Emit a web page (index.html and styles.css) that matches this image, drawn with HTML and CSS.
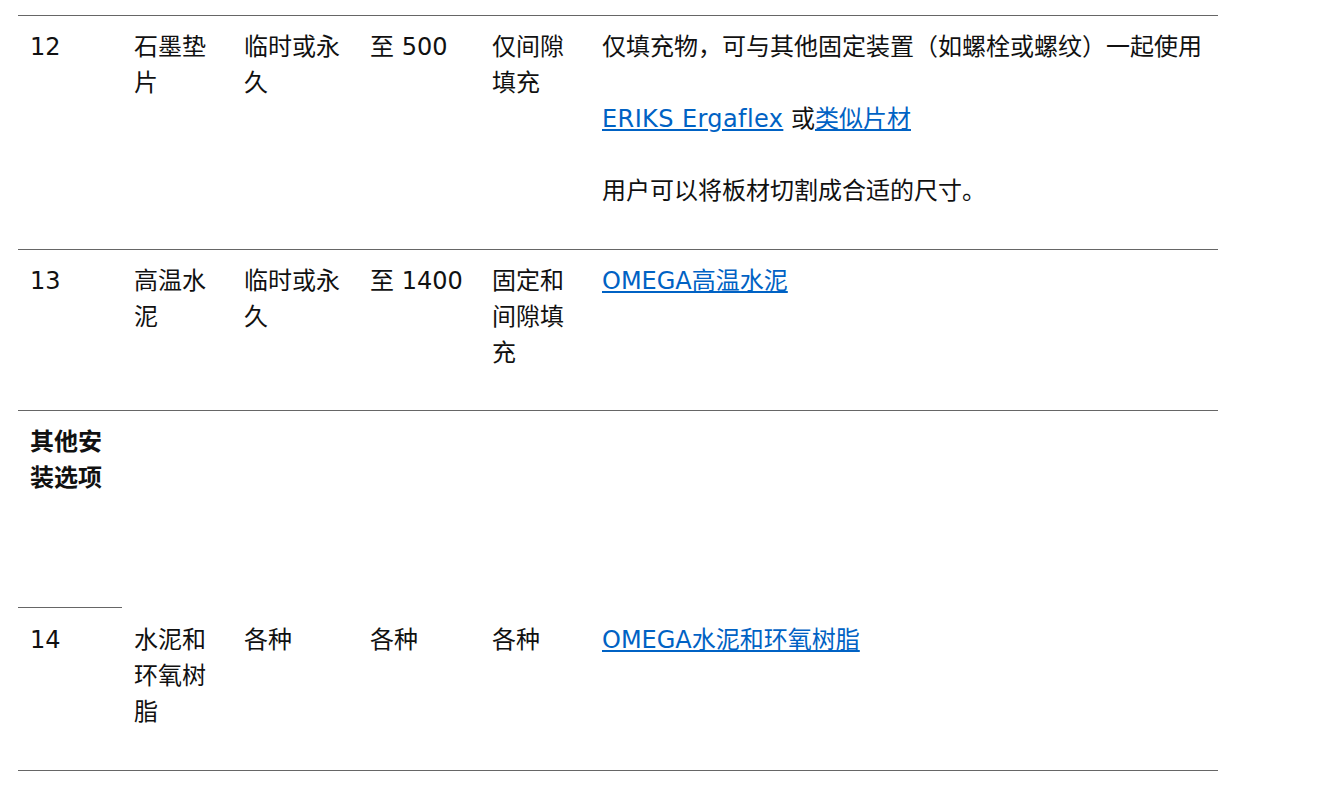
FILE: index.html
```html
<!DOCTYPE html>
<html lang="zh">
<head>
<meta charset="utf-8">
<link rel="stylesheet" href="styles.css">
</head>
<body>
<table class="spec">
  <colgroup>
    <col class="c1"><col class="c2"><col class="c3"><col class="c4"><col class="c5"><col class="c6">
  </colgroup>
  <tbody>
    <tr class="row first">
      <td>12</td>
      <td>石墨垫片</td>
      <td>临时或永久</td>
      <td>至 500</td>
      <td>仅间隙填充</td>
      <td>
        <p>仅填充物，可与其他固定装置（如螺栓或螺纹）一起使用</p>
        <p><a href="#" class="latin">ERIKS Ergaflex</a> 或<a href="#">类似片材</a></p>
        <p>用户可以将板材切割成合适的尺寸。</p>
      </td>
    </tr>
    <tr class="row">
      <td>13</td>
      <td>高温水泥</td>
      <td>临时或永久</td>
      <td>至 1400</td>
      <td>固定和间隙填充</td>
      <td><a href="#">OMEGA高温水泥</a></td>
    </tr>
    <tr class="row group">
      <th>其他安装选项</th>
      <td></td><td></td><td></td><td></td><td></td>
    </tr>
    <tr class="row last">
      <td class="lined">14</td>
      <td>水泥和环氧树脂</td>
      <td>各种</td>
      <td>各种</td>
      <td>各种</td>
      <td><a href="#">OMEGA水泥和环氧树脂</a></td>
    </tr>
  </tbody>
</table>
</body>
</html>
```

FILE: styles.css
```css
html, body {
  margin: 0;
  padding: 0;
  background: #ffffff;
}

body {
  padding: 15px 0 0 18px;
  font-family: "DejaVu Sans", "Noto Sans CJK SC", sans-serif;
  font-size: 24px;
  line-height: 36px;
  color: #111111;
}

.spec {
  width: 1200px;
  border-collapse: collapse;
  table-layout: fixed;
}

.c1 { width: 104px; }
.c2 { width: 110px; }
.c3 { width: 126px; }
.c4 { width: 122px; }
.c5 { width: 110px; }
.c6 { width: 628px; }

.spec td,
.spec th {
  vertical-align: top;
  text-align: left;
  padding: 13px 12px 39px 12px;
  border-top: 1px solid #666666;
}

.first td {
  padding-bottom: 40px;
}

.spec th {
  font-weight: 700;
}

.group th,
.group td {
  padding-bottom: 111px;
}

.last td {
  border-top: none;
  border-bottom: 1px solid #666666;
  padding-top: 14px;
  padding-bottom: 40px;
}

.last td.lined {
  border-top: 1px solid #666666;
}

.spec p {
  margin: 0 0 36px 0;
}

.spec p:last-child {
  margin-bottom: 0;
}

.spec a {
  color: #0062c4;
  text-decoration: underline;
}

.spec a.latin {
  letter-spacing: 0.4px;
}
```
